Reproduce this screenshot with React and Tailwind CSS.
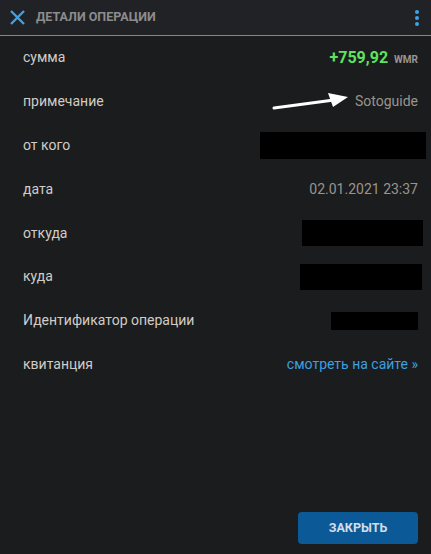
import React from 'react';

const rows = [
  { label: 'сумма', kind: 'amount' },
  { label: 'примечание', kind: 'note' },
  { label: 'от кого', kind: 'box', w: 'w-[166px]', h: 'h-[27px]', mr: 'mr-[-8px]' },
  { label: 'дата', kind: 'text', text: '02.01.2021 23:37' },
  { label: 'откуда', kind: 'box', w: 'w-[121px]', h: 'h-[26px]', mr: 'mr-[-5px]' },
  { label: 'куда', kind: 'box', w: 'w-[122px]', h: 'h-[26px]', mr: 'mr-[-4px]' },
  { label: 'Идентификатор операции', kind: 'box', w: 'w-[87px]', h: 'h-[18px]', mr: 'mr-0' },
  { label: 'квитанция', kind: 'link' },
];

export default function App() {
  return (
    <div className="w-[431px] h-[554px] bg-[#1b1c1e] flex flex-col font-['Roboto',sans-serif] overflow-hidden">
      {/* шапка */}
      <div className="h-[36px] shrink-0 bg-[#212226] border-b border-[#8b857a] flex items-center pl-[10px] pr-[12px]">
        <svg width="15" height="15" viewBox="0 0 15 15" className="shrink-0">
          <path d="M1 1 L14 14 M14 1 L1 14" stroke="#3ea2e6" strokeWidth="2.4" strokeLinecap="butt" />
        </svg>
        <span className="ml-[11px] text-[12.5px] font-bold text-[#8c8c8c]">ДЕТАЛИ ОПЕРАЦИИ</span>
        <div className="ml-auto flex flex-col gap-[2px]">
          <span className="w-[4px] h-[4px] rounded-full bg-[#3ea2e6]" />
          <span className="w-[4px] h-[4px] rounded-full bg-[#3ea2e6]" />
          <span className="w-[4px] h-[4px] rounded-full bg-[#3ea2e6]" />
        </div>
      </div>

      <div className="flex flex-col">
        {rows.map((r) => (
          <div key={r.label} className="h-[43.8px] flex items-center justify-between pl-[23px] pr-[13px]">
            <span className="text-[14px] text-[#d0ccc6]">{r.label}</span>
            {r.kind === 'amount' && (
              <span className="flex items-baseline">
                <span className="text-[16px] font-bold text-[#5fe25f]">+759,92</span>
                <span className="ml-[6px] text-[10px] font-bold text-[#9a9590]">WMR</span>
              </span>
            )}
            {r.kind === 'note' && (
              <span className="relative text-[14px] text-[#9a948c]">
                <svg width="80" height="22" viewBox="0 0 80 22" className="absolute right-[66px] top-[-1px]">
                  <path d="M2 18 L62 10" stroke="#ffffff" strokeWidth="3" strokeLinecap="round" />
                  <path d="M56 3 L76 7 L61 17 Z" fill="#ffffff" />
                </svg>
                Sotoguide
              </span>
            )}
            {r.kind === 'box' && <span className={`${r.w} ${r.h} ${r.mr} bg-black`} />}
            {r.kind === 'text' && <span className="text-[14px] text-[#9a948c]">{r.text}</span>}
            {r.kind === 'link' && <span className="text-[14px] text-[#3d9fe0]">смотреть на сайте »</span>}
          </div>
        ))}
      </div>

      <div className="mt-auto flex justify-end pr-[13px] pb-[10px]">
        <button className="w-[120px] h-[32px] rounded-[4px] bg-[#0b5a97] text-[12.5px] font-bold text-[#d3dde8]">
          ЗАКРЫТЬ
        </button>
      </div>
    </div>
  );
}
